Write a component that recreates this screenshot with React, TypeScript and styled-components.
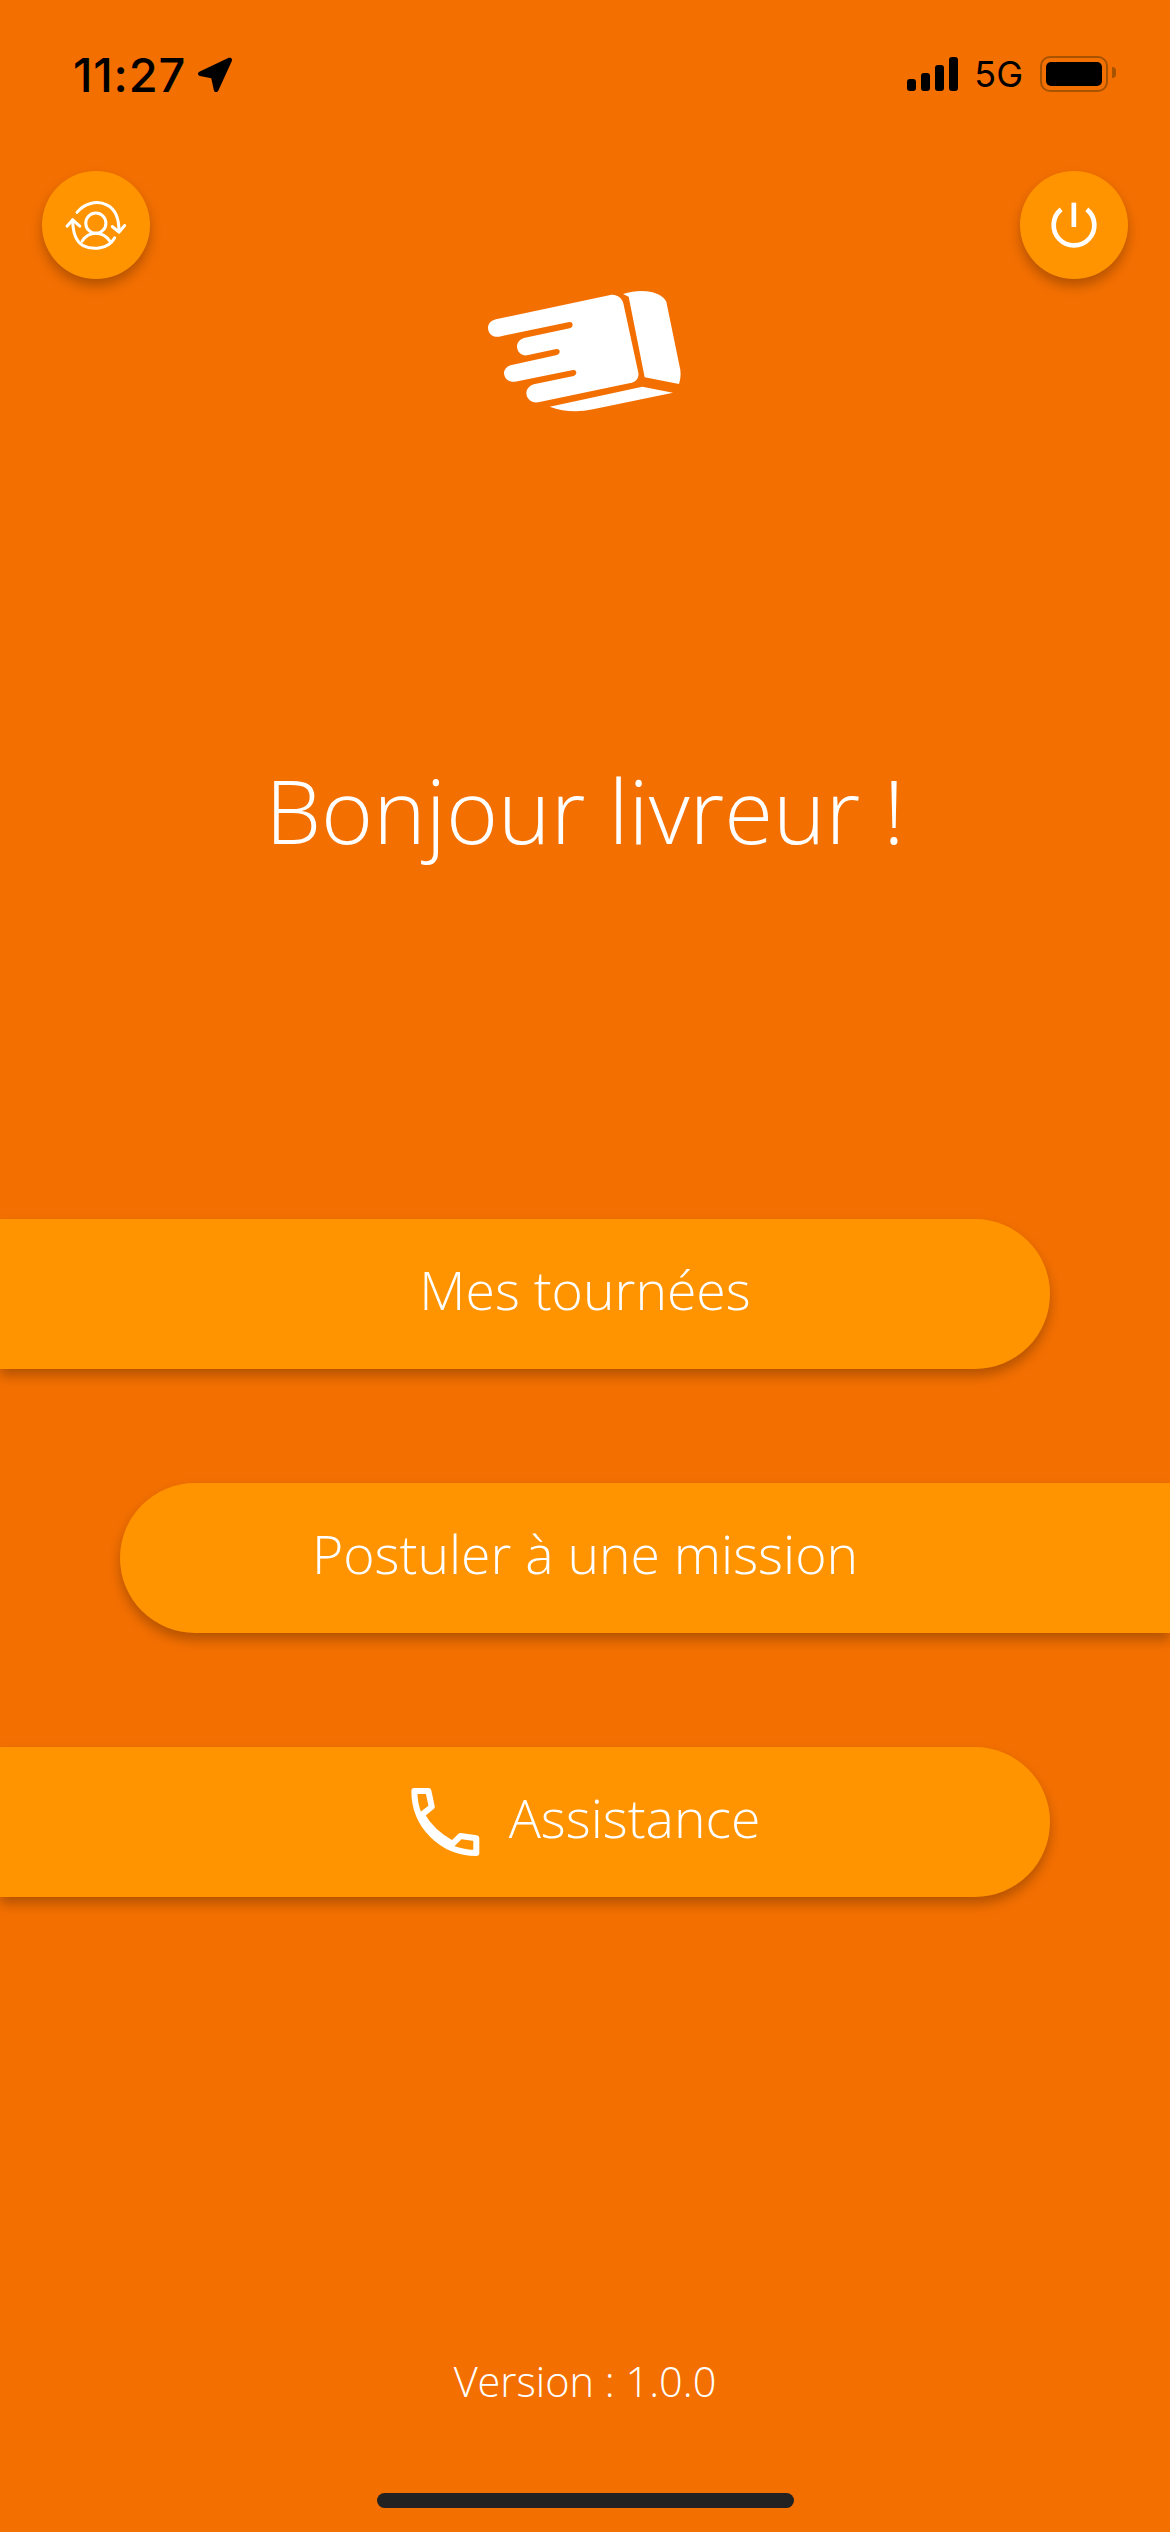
import styled, { createGlobalStyle } from "styled-components";

const GlobalStyle = createGlobalStyle`
  html, body {
    margin: 0;
    padding: 0;
    background-color: #f36f00;
  }
`;

const Screen = styled.div`
  width: 1170px;
  height: 2532px;
  display: flex;
  flex-direction: column;
  overflow: hidden;
  background-color: #f36f00;
  color: white;
  font-family: "Open Sans", "Lato", sans-serif;
  font-weight: 300;
`;

const StatusBar = styled.div`
  height: 148px;
  flex-shrink: 0;
  display: flex;
  align-items: center;
  justify-content: space-between;
  padding: 0 62px 0 73px;
  color: black;
  font-family: "Inter", "Liberation Sans", sans-serif;
`;

const StatusGroup = styled.div`
  display: flex;
  align-items: center;
`;

const Time = styled.span`
  font-size: 47px;
  font-weight: 500;
  letter-spacing: 0.8px;
  margin-right: 10px;
`;

const SignalBars = styled.div`
  display: flex;
  align-items: flex-end;
  gap: 5px;
  height: 34px;
  margin-right: 16px;
`;

const SignalBar = styled.div<{ $height: number }>`
  width: 9px;
  height: ${(p) => p.$height}px;
  background-color: black;
  border-radius: 3px;
`;

const Network = styled.span`
  font-size: 36px;
  font-weight: 400;
  margin-right: 17px;
`;

const Battery = styled.div`
  box-sizing: border-box;
  width: 68px;
  height: 36px;
  padding: 4px;
  border: 2.5px solid #a85300;
  border-radius: 10px;
  position: relative;

  &::after {
    content: "";
    position: absolute;
    right: -10px;
    top: 9px;
    width: 4px;
    height: 11px;
    background-color: #a85300;
    border-radius: 0 6px 6px 0;
  }
`;

const BatteryLevel = styled.div`
  width: 100%;
  height: 100%;
  background-color: black;
  border-radius: 5px;
`;

const ActionRow = styled.div`
  display: flex;
  justify-content: space-between;
  padding: 23px 42px 0;
`;

const RoundButton = styled.button`
  width: 108px;
  height: 108px;
  padding: 0;
  border: none;
  border-radius: 50%;
  background-color: #ff9400;
  box-shadow: 0 7px 12px rgba(0, 0, 0, 0.25);
  display: flex;
  align-items: center;
  justify-content: center;
`;

const Logo = styled.svg`
  display: block;
  width: 194px;
  height: 123px;
  margin: 11px auto 0;
`;

const Greeting = styled.h1`
  margin: 342px 0 0;
  height: 110px;
  line-height: 110px;
  text-align: center;
  font-size: 89px;
  font-weight: 300;
`;

const Menu = styled.div`
  margin-top: 354px;
  display: flex;
  flex-direction: column;
  gap: 114px;
`;

const MenuButton = styled.button<{ $side: "left" | "right" }>`
  box-sizing: border-box;
  width: 1050px;
  height: 150px;
  border: none;
  background-color: #ff9400;
  color: white;
  font-family: inherit;
  font-weight: 300;
  font-size: 53.5px;
  display: flex;
  align-items: center;
  justify-content: center;
  gap: 27px;
  box-shadow: 0 7px 12px rgba(0, 0, 0, 0.25);
  ${(p) =>
    p.$side === "left"
      ? `
    padding: 0 0 0 120px;
    border-radius: 0 75px 75px 0;
  `
      : `
    margin-left: 120px;
    padding: 0 120px 0 0;
    border-radius: 75px 0 0 75px;
  `}
`;

const ButtonLabel = styled.span`
  margin-bottom: 9px;
`;

const Footer = styled.div`
  margin-top: auto;
  display: flex;
  flex-direction: column;
  align-items: center;
  padding-bottom: 24px;
`;

const Version = styled.div`
  height: 50px;
  line-height: 50px;
  font-size: 41.5px;
`;

const HomeIndicator = styled.div`
  margin-top: 87px;
  width: 417px;
  height: 15px;
  border-radius: 8px;
  background-color: #222222;
`;

const LocationIcon = () => (
  <svg width="39" height="39" viewBox="590 165 118 118">
    <path
      d="M692 180 L603 222 L642 229 L651 270 Z"
      fill="black"
      stroke="black"
      strokeWidth="14"
      strokeLinejoin="round"
    />
  </svg>
);

const SwitchUserIcon = () => (
  <svg
    width="67"
    height="57"
    viewBox="190 590 200 170"
    fill="none"
    stroke="white"
    strokeWidth="9"
    strokeLinecap="round"
    strokeLinejoin="round"
  >
    <circle cx="288" cy="668" r="30" />
    <path d="M247 722 C258 704 272 698 288 698 C304 698 318 704 330 722" />
    <path d="M232 636 C252 610 290 598 322 614 C345 626 357 650 357 690" />
    <path d="M337 678 L357 695 L374 675" />
    <path d="M344 712 C325 745 280 750 250 735 C228 723 219 695 219 658" />
    <path d="M202 677 L219 658 L240 677" />
  </svg>
);

const PowerIcon = () => (
  <svg
    width="52"
    height="50"
    viewBox="595 510 155 150"
    fill="none"
    stroke="white"
    strokeWidth="14"
  >
    <path d="M634 538 A61 61 0 1 0 711 538" />
    <path d="M672 518 V591" />
  </svg>
);

const PhoneIcon = () => (
  <svg
    width="72"
    height="72"
    viewBox="95 112 215 215"
    fill="none"
    stroke="white"
    strokeWidth="18"
    strokeLinejoin="round"
  >
    <path d="M108 127 H150 L160 174 L130 198 C150 235 185 265 222 285 L246 261 L293 268 V312 C190 312 108 230 108 127 Z" />
  </svg>
);

export default function App() {
  return (
    <Screen>
      <GlobalStyle />
      <StatusBar>
        <StatusGroup>
          <Time>11:27</Time>
          <LocationIcon />
        </StatusGroup>
        <StatusGroup>
          <SignalBars>
            {[12, 18, 26, 34].map((h) => (
              <SignalBar key={h} $height={h} />
            ))}
          </SignalBars>
          <Network>5G</Network>
          <Battery>
            <BatteryLevel />
          </Battery>
        </StatusGroup>
      </StatusBar>

      <ActionRow>
        <RoundButton>
          <SwitchUserIcon />
        </RoundButton>
        <RoundButton>
          <PowerIcon />
        </RoundButton>
      </ActionRow>

      <Logo viewBox="85 60 582 369">
        <path
          fill="white"
          d="M112 147 L452 75 C472 72 487 84 491 100 L536 308 C539 324 528 336 512 339 L236 397 C216 400 201 388 200 370 C200 356 210 346 226 342 L342 318 C354 314 352 298 340 300 L166 335 C148 338 134 326 133 310 C133 298 142 288 156 285 L292 255 C304 251 302 235 290 237 L202 256 C186 258 173 246 172 230 C172 216 182 206 196 203 L330 175 C343 171 341 154 329 156 L118 200 C100 203 86 192 85 174 C85 160 96 150 112 147 Z"
        />
        <path
          fill="white"
          d="M490 72 C520 62 550 60 575 66 C598 72 612 80 620 95 L662 300 C664 316 662 330 658 342 L555 322 L507 80 Z"
        />
        <path
          fill="white"
          d="M270 410 L548 350 L640 368 L400 418 C355 428 310 425 270 410 Z"
        />
      </Logo>

      <Greeting>Bonjour livreur !</Greeting>

      <Menu>
        <MenuButton $side="left">
          <ButtonLabel>Mes tournées</ButtonLabel>
        </MenuButton>
        <MenuButton $side="right">
          <ButtonLabel>Postuler à une mission</ButtonLabel>
        </MenuButton>
        <MenuButton $side="left">
          <PhoneIcon />
          <ButtonLabel>Assistance</ButtonLabel>
        </MenuButton>
      </Menu>

      <Footer>
        <Version>Version : 1.0.0</Version>
        <HomeIndicator />
      </Footer>
    </Screen>
  );
}
